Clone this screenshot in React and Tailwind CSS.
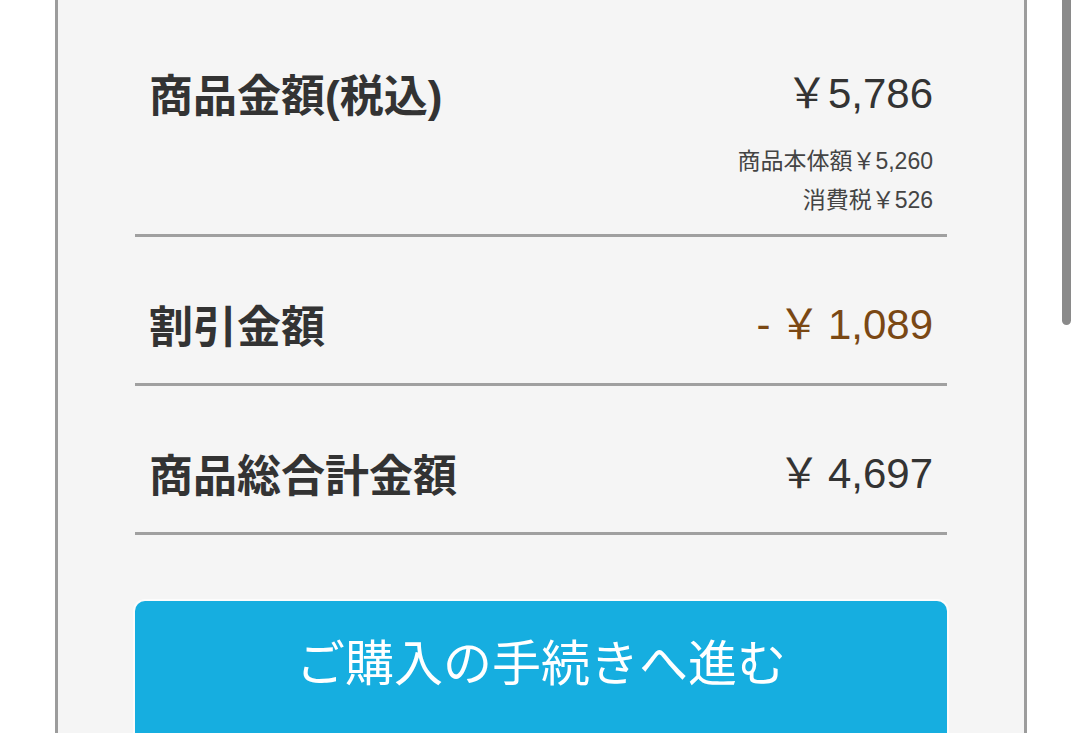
import React from "react";

const font = { fontFamily: '"Liberation Sans", "Noto Sans CJK JP", sans-serif' };

function Row({ label, price, priceClass = "text-[#333]", children, top = "pt-[65px]", bottom = "pb-[29px]" }) {
  return (
    <div>
      <div className={`flex justify-between items-start px-[14px] ${top} ${bottom}`}>
        <div className="text-[44px] font-bold leading-[52px] text-[#333]">{label}</div>
        <div className="flex flex-col items-end">
          <div className={`text-[42px] leading-[52px] -mt-[3px] [word-spacing:-4px] ${priceClass}`}>{price}</div>
          {children}
        </div>
      </div>
      <div className="h-[3px] bg-[#a0a0a0]" />
    </div>
  );
}

export default function App() {
  return (
    <div className="relative w-[1080px] h-[733px] overflow-hidden bg-white" style={font}>
      <div className="ml-[55px] w-[972px] h-full border-x-[3px] border-[#9c9c9c] bg-[#f5f5f5] px-[77px]">
        <Row label="商品金額(税込)" price="￥5,786" top="pt-[71px]" bottom="pb-[14px]">
          <div className="mt-[22px] flex flex-col items-end text-[23px] leading-[39px] text-[#444]">
            <span>商品本体額￥5,260</span>
            <span>消費税￥526</span>
          </div>
        </Row>
        <Row label="割引金額" price="- ￥ 1,089" priceClass="text-[#7a4814]" />
        <Row label="商品総合計金額" price="￥ 4,697" />
        <button className="mt-[66px] w-full h-[150px] rounded-[10px] bg-[#16aee0] ring-2 ring-white/70 text-white text-[49px] font-normal flex items-start justify-center pt-[34px] leading-[58px]">
          ご購入の手続きへ進む
        </button>
      </div>
      <div className="absolute right-[9px] top-0 w-[9px] h-[325px] rounded-b-full bg-[#8a8a8a]" />
    </div>
  );
}
